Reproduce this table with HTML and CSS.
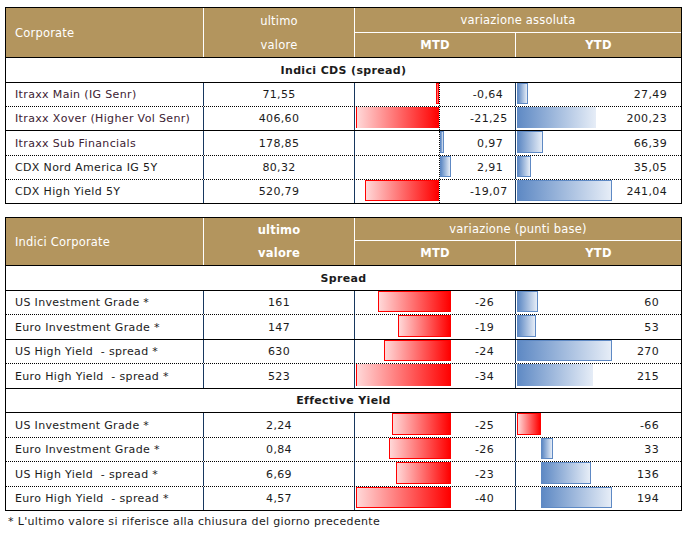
FILE: index.html
```html
<!DOCTYPE html>
<html lang="it">
<head>
<meta charset="utf-8">
<title>Corporate</title>
<link rel="stylesheet" href="styles.css">
</head>
<body>
<div class="page">
  <div class="tbl">
    <div class="head head-a">
      <div class="hc name-h">Corporate</div>
      <div class="hc uv u">ultimo</div>
      <div class="hc uv v">valore</div>
      <div class="hc var">variazione assoluta</div>
      <div class="hc mtd bold">MTD</div>
      <div class="hc ytd bold">YTD</div>
    </div>
    <div class="sec r25 solid">Indici CDS (spread)</div>
    <div class="row r24 dot itraxx">
      <div class="name">Itraxx Main (IG Senr)</div><div class="val">71,55</div>
      <div class="bar"><div class="neg t1 axis"><span class="b n" style="width:3px"></span></div><div class="pos t1p"></div><span class="num m1">-0,64</span></div>
      <div class="bar last"><div class="pos"><span class="b p" style="width:11px"></span></div><span class="num y1">27,49</span></div>
    </div>
    <div class="row r24 solid itraxx">
      <div class="name">Itraxx Xover (Higher Vol Senr)</div><div class="val">406,60</div>
      <div class="bar"><div class="neg t1 axis"><span class="b n nb" style="width:83px"></span></div><div class="pos t1p"></div><span class="num m1">-21,25</span></div>
      <div class="bar last"><div class="pos"><span class="b p pb" style="width:79px"></span></div><span class="num y1">200,23</span></div>
    </div>
    <div class="row r25 dot itraxx">
      <div class="name">Itraxx Sub Financials</div><div class="val">178,85</div>
      <div class="bar"><div class="neg t1 axis"></div><div class="pos t1p"><span class="b p" style="width:4px"></span></div><span class="num m1">0,97</span></div>
      <div class="bar last"><div class="pos"><span class="b p" style="width:26px"></span></div><span class="num y1">66,39</span></div>
    </div>
    <div class="row r24 dot">
      <div class="name">CDX Nord America IG 5Y</div><div class="val">80,32</div>
      <div class="bar"><div class="neg t1 axis"></div><div class="pos t1p"><span class="b p" style="width:11px"></span></div><span class="num m1">2,91</span></div>
      <div class="bar last"><div class="pos"><span class="b p" style="width:14px"></span></div><span class="num y1">35,05</span></div>
    </div>
    <div class="row r23">
      <div class="name">CDX High Yield 5Y</div><div class="val">520,79</div>
      <div class="bar"><div class="neg t1 axis"><span class="b n" style="width:74px"></span></div><div class="pos t1p"></div><span class="num m1">-19,07</span></div>
      <div class="bar last"><div class="pos"><span class="b p" style="width:95px"></span></div><span class="num y1">241,04</span></div>
    </div>
  </div>

  <div class="tbl tbl-b">
    <div class="head head-b">
      <div class="hc name-h">Indici Corporate</div>
      <div class="hc uv u bold">ultimo</div>
      <div class="hc uv v bold">valore</div>
      <div class="hc var">variazione (punti base)</div>
      <div class="hc mtd bold">MTD</div>
      <div class="hc ytd bold">YTD</div>
    </div>
    <div class="sec r25 solid">Spread</div>
    <div class="row r24 dot">
      <div class="name">US Investment Grade *</div><div class="val">161</div>
      <div class="bar"><div class="neg t2"><span class="b n" style="width:73px"></span></div><span class="num m2">-26</span></div>
      <div class="bar last"><div class="pos"><span class="b p" style="width:21px"></span></div><span class="num y2">60</span></div>
    </div>
    <div class="row r25 solid">
      <div class="name">Euro Investment Grade *</div><div class="val">147</div>
      <div class="bar"><div class="neg t2"><span class="b n" style="width:53px"></span></div><span class="num m2">-19</span></div>
      <div class="bar last"><div class="pos"><span class="b p" style="width:19px"></span></div><span class="num y2">53</span></div>
    </div>
    <div class="row r24 dot">
      <div class="name">US High Yield &nbsp;- spread *</div><div class="val">630</div>
      <div class="bar"><div class="neg t2"><span class="b n" style="width:67px"></span></div><span class="num m2">-24</span></div>
      <div class="bar last"><div class="pos"><span class="b p" style="width:95px"></span></div><span class="num y2">270</span></div>
    </div>
    <div class="row r25 solid">
      <div class="name">Euro High Yield &nbsp;- spread *</div><div class="val">523</div>
      <div class="bar"><div class="neg t2"><span class="b n nb" style="width:95px"></span></div><span class="num m2">-34</span></div>
      <div class="bar last"><div class="pos"><span class="b p pb" style="width:76px"></span></div><span class="num y2">215</span></div>
    </div>
    <div class="sec r24 solid">Effective Yield</div>
    <div class="row r25 dot">
      <div class="name">US Investment Grade *</div><div class="val">2,24</div>
      <div class="bar"><div class="neg t2"><span class="b n" style="width:59px"></span></div><span class="num m2">-25</span></div>
      <div class="bar last"><div class="neg ty"><span class="b n" style="width:24px"></span></div><div class="pos"></div><span class="num y2">-66</span></div>
    </div>
    <div class="row r24 dot">
      <div class="name">Euro Investment Grade *</div><div class="val">0,84</div>
      <div class="bar"><div class="neg t2"><span class="b n" style="width:62px"></span></div><span class="num m2">-26</span></div>
      <div class="bar last"><div class="neg ty"></div><div class="pos"><span class="b p" style="width:12px"></span></div><span class="num y2">33</span></div>
    </div>
    <div class="row r25 dot">
      <div class="name">US High Yield &nbsp;- spread *</div><div class="val">6,69</div>
      <div class="bar"><div class="neg t2"><span class="b n" style="width:55px"></span></div><span class="num m2">-23</span></div>
      <div class="bar last"><div class="neg ty"></div><div class="pos"><span class="b p" style="width:50px"></span></div><span class="num y2">136</span></div>
    </div>
    <div class="row r23">
      <div class="name">Euro High Yield &nbsp;- spread *</div><div class="val">4,57</div>
      <div class="bar"><div class="neg t2"><span class="b n" style="width:95px"></span></div><span class="num m2">-40</span></div>
      <div class="bar last"><div class="neg ty"></div><div class="pos"><span class="b p" style="width:71px"></span></div><span class="num y2">194</span></div>
    </div>
  </div>
  <p class="note">* L'ultimo valore si riferisce alla chiusura del giorno precedente</p>
</div>
</body>
</html>
```

FILE: styles.css
```css
* { box-sizing: border-box; }
html, body { margin: 0; padding: 0; background: #fff; }
body {
  font-family: "DejaVu Sans", "Liberation Sans", sans-serif;
  font-size: 11px;
  letter-spacing: 0.35px;
  color: #1b1b1b;
}
.page { padding: 7px 0 0 5px; }

.tbl {
  width: 677px;
  border: 1px solid #000;
}
.tbl-b { margin-top: 13px; }

.head {
  display: grid;
  grid-template-columns: 198px 151px 161px 165px;
  background: #b3955e;
  color: #fff;
  font-size: 11.5px;
  letter-spacing: 0.2px;
  border-bottom: 1px solid #000;
}
.head-a { grid-template-rows: 25px 24px; }
.head-b { grid-template-rows: 23px 24px; }
.hc { display: flex; align-items: center; justify-content: center; }
.name-h {
  grid-column: 1; grid-row: 1 / 3;
  justify-content: flex-start;
  padding-left: 9px;
  border-right: 1px solid #fff;
}
.uv { grid-column: 2; border-right: 1px solid #fff; }
.u { grid-row: 1; }
.v { grid-row: 2; }
.var { grid-column: 3 / 5; grid-row: 1; border-bottom: 1px solid #fff; }
.mtd { grid-column: 3; grid-row: 2; border-right: 1px solid #fff; }
.ytd { grid-column: 4; grid-row: 2; }
.bold { font-weight: bold; }

.sec {
  display: flex; align-items: center; justify-content: center;
  font-weight: bold;
}
.r25 { height: 25px; }
.r24 { height: 24px; }
.r23 { height: 23px; }
.dot { border-bottom: 1px dotted #000; }
.solid { border-bottom: 1px solid #000; }

.row {
  display: grid;
  grid-template-columns: 198px 151px 161px 165px;
}
.row > div { border-right: 1px solid #17375e; }
.row > .last { border-right: none; }
.name { display: flex; align-items: center; padding-left: 9px; white-space: pre; }
.itraxx .name { color: #3d2233; }
.val { display: flex; align-items: center; justify-content: center; }

.bar { display: flex; align-items: stretch; padding-left: 1px; }
.neg, .pos { display: flex; align-items: stretch; padding-bottom: 2px; flex: none; }
.neg { justify-content: flex-end; }
.t1 { width: 84px; }
.axis { border-right: 1px dotted #000; }
.t1p { width: 30px; }
.t2 { width: 95px; }
.ty { width: 24px; }
.b { display: block; }
.n {
  background: linear-gradient(to right, #ffd8d8, #ff0000);
  border: 1px solid #ff0000;
}
.p {
  background: linear-gradient(to right, #5e89c4, #e6edf7);
  border: 1px solid #5e89c4;
}
.nb { border-top: none; border-bottom: none; border-right: none; }
.pb { border: none; }
.num { flex: 1; align-self: center; text-align: right; }
.m1 { padding-right: 12px; }
.y1 { padding-right: 14px; }
.m2 { padding-right: 21px; }
.y2 { padding-right: 22px; }

.note {
  margin: 4px 0 0 3px;
  line-height: 14px;
  font-size: 11px;
}
```
